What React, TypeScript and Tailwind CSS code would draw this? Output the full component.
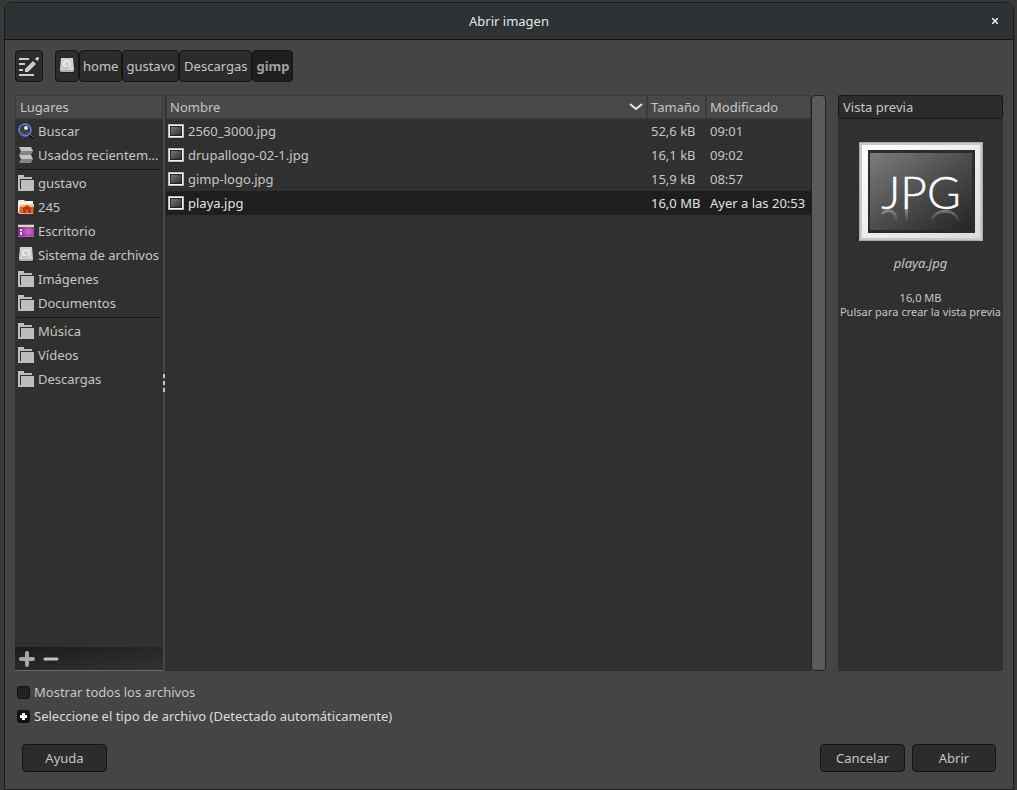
import { useState } from "react";
import type { ReactNode } from "react";
import { clsx } from "clsx";

type Place = { id: string; label: string; icon: ReactNode };

const FolderIcon = () => (
  <svg width="16" height="16" viewBox="0 0 16 16" aria-hidden="true">
    <path fill="#bdbdbd" d="M0 0h6v2h8v2H2v10h1V5h13v11H0z" />
  </svg>
);

const SearchIcon = () => (
  <svg width="16" height="16" viewBox="0 0 16 16" aria-hidden="true">
    <path d="M11 11l4 4" stroke="#111" strokeWidth="3" />
    <path d="M12 11l3 3" stroke="#7d786c" strokeWidth="1" />
    <circle cx="7" cy="7" r="6" fill="#3b3e48" stroke="#31479a" strokeWidth="2" />
    <circle cx="7" cy="7" r="6" fill="none" stroke="#7f97dc" strokeWidth="1" />
    <circle cx="8" cy="5" r="2" fill="#dfe4ea" />
    <path d="M4 8a3 3 0 0 0 6 1" stroke="#62666e" strokeWidth="1" fill="none" />
  </svg>
);

const RecentIcon = () => (
  <svg width="16" height="16" viewBox="0 0 16 16" aria-hidden="true">
    <path fill="#c4c4c4" d="M1 0h12l2 4H3z" />
    <path fill="#858585" d="M3 4h12l-2 4H1z" />
    <path fill="#c4c4c4" d="M1 8h12l2 4H3z" />
    <path fill="#858585" d="M3 12h12l-2 4H1z" />
  </svg>
);

const HomeFolderIcon = () => (
  <svg width="16" height="16" viewBox="0 0 16 16" aria-hidden="true">
    <path fill="#f4efe9" d="M0 2l1-1h5l1 1h8v12H0z" />
    <path fill="#d9682c" d="M2 5h14l-1 10H1z" />
    <path fill="#efb67c" d="M2 5h14v3H2z" />
    <path fill="#f7d9b0" d="M2 5h14v1H2z" />
    <path fill="#bb3418" d="M9 6l5 4h-1v4h-3v-3H8v3H5v-4H4z" />
    <path fill="#e9a98a" d="M1 14h14v1H1z" />
  </svg>
);

const DesktopIcon = () => (
  <svg width="16" height="16" viewBox="0 0 16 16" aria-hidden="true">
    <defs>
      <radialGradient id="desktopGlow" cx="0.650" cy="0.600" r="0.600">
        <stop offset="0" stopColor="#d070c8" />
        <stop offset="1" stopColor="#8d2596" />
      </radialGradient>
    </defs>
    <rect y="1" width="16" height="13" fill="url(#desktopGlow)" />
    <path fill="#5d6248" d="M0 1h16v1H0z" />
    <path fill="#dcd9bd" d="M0 2h16v2H0z" />
    <path fill="#e6d3e8" d="M2 6h2v2H2zM2 9h2v3H2z" />
    <path fill="#b060b4" d="M0 13h16v1H0z" />
  </svg>
);

const DriveIcon = () => (
  <svg width="16" height="16" viewBox="0 0 16 16" aria-hidden="true">
    <path fill="#d4d4d4" d="M2 0h12l1 12H1z" />
    <path fill="#b0b0b0" d="M1 12h14v1l-1 1H2l-1-1z" />
    <path fill="#1d1d1d" d="M2 14h12v1H2z" />
    <ellipse cx="8" cy="6" rx="5" ry="5" fill="#e6e6e6" stroke="#c0c0c0" strokeWidth="1" />
    <circle cx="8" cy="6" r="2" fill="#cccccc" />
    <path d="M4 10h4l2-2" stroke="#adadad" strokeWidth="1" fill="none" />
  </svg>
);

const EditPathIcon = () => (
  <svg width="22" height="22" viewBox="0 0 22 22" fill="#cccccc" aria-hidden="true">
    <path d="M1 3h10v2H1zM1 8h6v2H1zM1 14h4v2H1zM1 19h15v2H1z" />
    <path d="M7 17v-3l8-8 3 3-8 8z" />
    <path d="M17 4l2-2h1l1 1v1l-2 2z" />
  </svg>
);

const ImageFileIcon = () => (
  <svg width="16" height="14" viewBox="0 0 16 14" aria-hidden="true">
    <defs>
      <linearGradient id="fileThumb" x1="0" y1="0" x2="1" y2="1">
        <stop offset="0" stopColor="#777" />
        <stop offset="1" stopColor="#2e2e2e" />
      </linearGradient>
    </defs>
    <rect width="16" height="14" fill="#b9b9b9" />
    <rect x="1" y="1" width="14" height="12" fill="#f4f4f4" />
    <rect x="2" y="2" width="12" height="10" fill="#232323" />
    <rect x="3" y="3" width="10" height="8" fill="url(#fileThumb)" />
  </svg>
);

const JpgThumbnail = () => (
  <svg width="124" height="100" viewBox="0 0 124 100" role="img" aria-label="JPG">
    <defs>
      <linearGradient id="jpgFrame" x1="0" y1="0" x2="1" y2="1">
        <stop offset="0" stopColor="#ffffff" />
        <stop offset="1" stopColor="#dcdcdc" />
      </linearGradient>
      <linearGradient id="jpgInner" x1="0" y1="0" x2="1" y2="1">
        <stop offset="0" stopColor="#7c7c7c" />
        <stop offset="0.500" stopColor="#4d4d4d" />
        <stop offset="1" stopColor="#242424" />
      </linearGradient>
      <linearGradient id="jpgFade" x1="0" y1="67" x2="0" y2="80" gradientUnits="userSpaceOnUse">
        <stop offset="0" stopColor="#fff" stopOpacity="0.350" />
        <stop offset="1" stopColor="#fff" stopOpacity="0" />
      </linearGradient>
    </defs>
    <rect width="124" height="99" fill="#a9a9a9" />
    <rect x="1" y="1" width="122" height="97" fill="#c9c9c9" />
    <rect x="3" y="3" width="118" height="93" fill="url(#jpgFrame)" />
    <rect x="9" y="8" width="107" height="83" fill="#2b2b2b" />
    <rect x="11" y="11" width="102" height="77" fill="url(#jpgInner)" />
    <text
      x="62"
      y="67"
      fontFamily="Lato, sans-serif"
      fontSize="46"
      fontWeight="300"
      textAnchor="middle"
      fill="#ffffff"
      stroke="#ffffff"
      strokeWidth="0.500"
    >
      JPG
    </text>
    {/* reflection on the glass under the letters */}
    <g fill="none" stroke="url(#jpgFade)" strokeWidth="3">
      <path d="M23 72c5-5 14-5 14 7" />
      <path d="M72 79c5-13 23-13 28 0" />
    </g>
    <rect x="46" y="67" width="3" height="12" fill="url(#jpgFade)" />
  </svg>
);

const placeGroups: Place[][] = [
  [
    { id: "search", label: "Buscar", icon: <SearchIcon /> },
    { id: "recent", label: "Usados recientem…", icon: <RecentIcon /> },
  ],
  [
    { id: "home", label: "gustavo", icon: <FolderIcon /> },
    { id: "245", label: "245", icon: <HomeFolderIcon /> },
    { id: "desktop", label: "Escritorio", icon: <DesktopIcon /> },
    { id: "root", label: "Sistema de archivos", icon: <DriveIcon /> },
    { id: "pictures", label: "Imágenes", icon: <FolderIcon /> },
    { id: "documents", label: "Documentos", icon: <FolderIcon /> },
  ],
  [
    { id: "music", label: "Música", icon: <FolderIcon /> },
    { id: "videos", label: "Vídeos", icon: <FolderIcon /> },
    { id: "downloads", label: "Descargas", icon: <FolderIcon /> },
  ],
];

const files = [
  { name: "2560_3000.jpg", size: "52,6 kB", modified: "09:01" },
  { name: "drupallogo-02-1.jpg", size: "16,1 kB", modified: "09:02" },
  { name: "gimp-logo.jpg", size: "15,9 kB", modified: "08:57" },
  { name: "playa.jpg", size: "16,0 MB", modified: "Ayer a las 20:53" },
];

const crumbs = ["home", "gustavo", "Descargas", "gimp"];

const headerCell = "border border-[#3a3a3a] bg-[#484848] px-[3px] text-left font-normal";
const buttonBase = "rounded border border-[#151515] bg-[#2c2c2c] hover:bg-[#343434]";

const PathBar = () => {
  const [current, setCurrent] = useState("gimp");

  return (
    <div className="flex gap-3">
      <button
        type="button"
        aria-label="Editar ruta"
        className={clsx(buttonBase, "flex h-8 w-7 items-center justify-center")}
      >
        <EditPathIcon />
      </button>
      <nav aria-label="Ruta" className="flex">
        <button
          type="button"
          aria-label="Sistema de archivos"
          className={clsx(buttonBase, "flex h-8 w-6 items-center justify-center")}
        >
          <DriveIcon />
        </button>
        {crumbs.map((crumb) => (
          <button
            key={crumb}
            type="button"
            onClick={() => setCurrent(crumb)}
            className={clsx(
              "h-8 rounded border border-[#151515]",
              crumb.length > 7 ? "px-1" : "px-[3px]",
              crumb === current ? "bg-[#1e1e1e] font-bold text-[#a0a0a0]" : "bg-[#2c2c2c]"
            )}
          >
            {crumb}
          </button>
        ))}
      </nav>
    </div>
  );
};

const PlacesPanel = () => (
  <aside className="flex w-[148px] shrink-0 flex-col bg-[#303030]">
    <div className={clsx(headerCell, "h-6 pl-1 leading-[22px]")}>Lugares</div>
    {placeGroups.map((group, idx) => (
      <ul
        key={idx}
        className={clsx(idx > 0 && "mx-0.5 mt-0.5 border-t border-[#151515] pt-px")}
      >
        {group.map((place) => (
          <li key={place.id}>
            <button
              type="button"
              className={clsx(
                "flex h-6 w-full items-center gap-1 text-left whitespace-nowrap",
                idx > 0 ? "pl-px" : "pl-[3px]"
              )}
            >
              <span className="shrink-0">{place.icon}</span>
              {place.label}
            </button>
          </li>
        ))}
      </ul>
    ))}
    <div className="mt-auto flex h-6 items-center gap-2 border-b border-[#6a6a6a] bg-linear-to-br from-[#1c1c1c] to-[#323232] pl-1">
      <button type="button" aria-label="Añadir marcador">
        <svg width="16" height="16" viewBox="0 0 16 16" aria-hidden="true">
          <path d="M8 2v12M2 8h12" stroke="#a8a8a8" strokeWidth="4" strokeLinecap="round" />
        </svg>
      </button>
      <button type="button" aria-label="Quitar marcador">
        <svg width="16" height="16" viewBox="0 0 16 16" aria-hidden="true">
          <path d="M2 8h12" stroke="#c0c0c0" strokeWidth="3" strokeLinecap="round" />
        </svg>
      </button>
    </div>
  </aside>
);

const FileList = ({
  selected,
  onSelect,
}: {
  selected: string;
  onSelect: (name: string) => void;
}) => (
  <div className="flex min-w-0 flex-1">
    <div className="min-w-0 flex-1 bg-[#303030] pl-px">
      <table className="w-full table-fixed border-separate border-spacing-0">
        <colgroup>
          <col />
          <col className="w-[59px]" />
          <col className="w-[105px]" />
        </colgroup>
        <thead>
          <tr className="h-6">
            <th className={headerCell}>
              <div className="flex items-center justify-between">
                Nombre
                <svg width="14" height="8" viewBox="0 0 14 8" fill="none" aria-hidden="true">
                  <path d="M1 1l6 5 6-5" stroke="#e6e6e6" strokeWidth="2" />
                </svg>
              </div>
            </th>
            <th className={headerCell}>Tamaño</th>
            <th className={headerCell}>Modificado</th>
          </tr>
        </thead>
        <tbody>
          {files.map((file) => (
            <tr
              key={file.name}
              onClick={() => onSelect(file.name)}
              className={clsx("h-6", file.name === selected && "bg-[#1e1e1e] text-[#e2e2e2]")}
            >
              <td className="pl-0.5">
                <div className="flex items-center gap-1">
                  <ImageFileIcon />
                  {file.name}
                </div>
              </td>
              <td className="pl-1 whitespace-nowrap">{file.size}</td>
              <td className="pl-1 whitespace-nowrap">{file.modified}</td>
            </tr>
          ))}
        </tbody>
      </table>
    </div>
    <div className="w-[15px] rounded-sm border border-[#222] bg-[#5b5b5b]" />
  </div>
);

const PreviewPanel = ({ name }: { name: string }) => {
  const file = files.find((f) => f.name === name);

  return (
    <section className="ml-3 w-[165px] shrink-0 bg-[#303030] text-center">
      <h2 className="rounded border border-[#151515] bg-[#2c2c2c] px-1 text-left leading-[22px]">
        Vista previa
      </h2>
      <button type="button" className="w-full pt-[23px]">
        <span className="flex justify-center">
          <JpgThumbnail />
        </span>
        <span className="mt-[11px] block leading-5 italic">{name}</span>
        <span className="mt-[18px] block text-[11px] leading-[14px] whitespace-nowrap">
          {file?.size}
          <br />
          Pulsar para crear la vista previa
        </span>
      </button>
    </section>
  );
};

export default function App() {
  const [selected, setSelected] = useState("playa.jpg");
  const [showAll, setShowAll] = useState(false);
  const [typesOpen, setTypesOpen] = useState(false);

  return (
    <div className="flex min-h-screen flex-col bg-[#393939] pt-0.5 pr-[3px] pl-1 font-['Noto_Sans','Open_Sans',sans-serif] text-[13px] leading-5 text-[#c6c6c6]">
      <div
        role="dialog"
        aria-labelledby="dialog-title"
        className="flex flex-1 flex-col rounded-t-lg border border-[#1a1c1d] bg-[#454545]"
      >
        <header className="grid h-[37px] grid-cols-[1fr_auto_1fr] items-center rounded-t-lg border-b border-[#111] bg-[#2d3234] text-[#e6e6e6]">
          <h1 id="dialog-title" className="col-start-2">
            Abrir imagen
          </h1>
          <button type="button" aria-label="Cerrar" className="mr-[11px] justify-self-end p-1">
            <svg width="6" height="6" viewBox="0 0 6 6" aria-hidden="true">
              <path d="M0 0l6 6M6 0l-6 6" stroke="#f0f0f0" strokeWidth="1.500" />
            </svg>
          </button>
        </header>

        <div className="flex flex-1 flex-col px-[10px] pt-[10px] pb-[17px]">
          <PathBar />

          <main className="mt-[13px] flex flex-1">
            <PlacesPanel />
            <div className="flex w-0.5 flex-col items-center justify-center gap-[3px]">
              <span className="h-1 w-0.5 bg-[#c4c4c4]" />
              <span className="h-1 w-0.5 bg-[#c4c4c4]" />
              <span className="h-1 w-0.5 bg-[#c4c4c4]" />
            </div>
            <FileList selected={selected} onSelect={setSelected} />
            <PreviewPanel name={selected} />
          </main>

          <div className="mt-[9px] flex flex-col items-start pl-0.5">
            <label className="flex h-6 items-center gap-1">
              <input
                type="checkbox"
                checked={showAll}
                onChange={(e) => setShowAll(e.target.checked)}
                className="size-[13px] appearance-none rounded-[3px] border border-[#121212] bg-[#222] checked:bg-[#ddd]"
              />
              Mostrar todos los archivos
            </label>
            <button
              type="button"
              aria-expanded={typesOpen}
              onClick={() => setTypesOpen(!typesOpen)}
              className="flex h-6 items-center gap-1 text-[#dcdcdc]"
            >
              <svg width="13" height="13" viewBox="0 0 13 13" aria-hidden="true">
                <rect width="13" height="13" rx="3" fill="#121212" />
                <path d="M5 3h3v2h2v3H8v2H5V8H3V5h2z" fill="#fff" />
              </svg>
              Seleccione el tipo de archivo (Detectado automáticamente)
            </button>
          </div>

          <footer className="mt-4 flex gap-[7px] pr-[7px] pl-[7px]">
            <button type="button" className={clsx(buttonBase, "mr-auto h-7 w-[85px]")}>
              Ayuda
            </button>
            <button type="button" className={clsx(buttonBase, "h-7 w-[85px]")}>
              Cancelar
            </button>
            <button type="button" className={clsx(buttonBase, "h-7 w-[84px]")}>
              Abrir
            </button>
          </footer>
        </div>
      </div>
    </div>
  );
}
